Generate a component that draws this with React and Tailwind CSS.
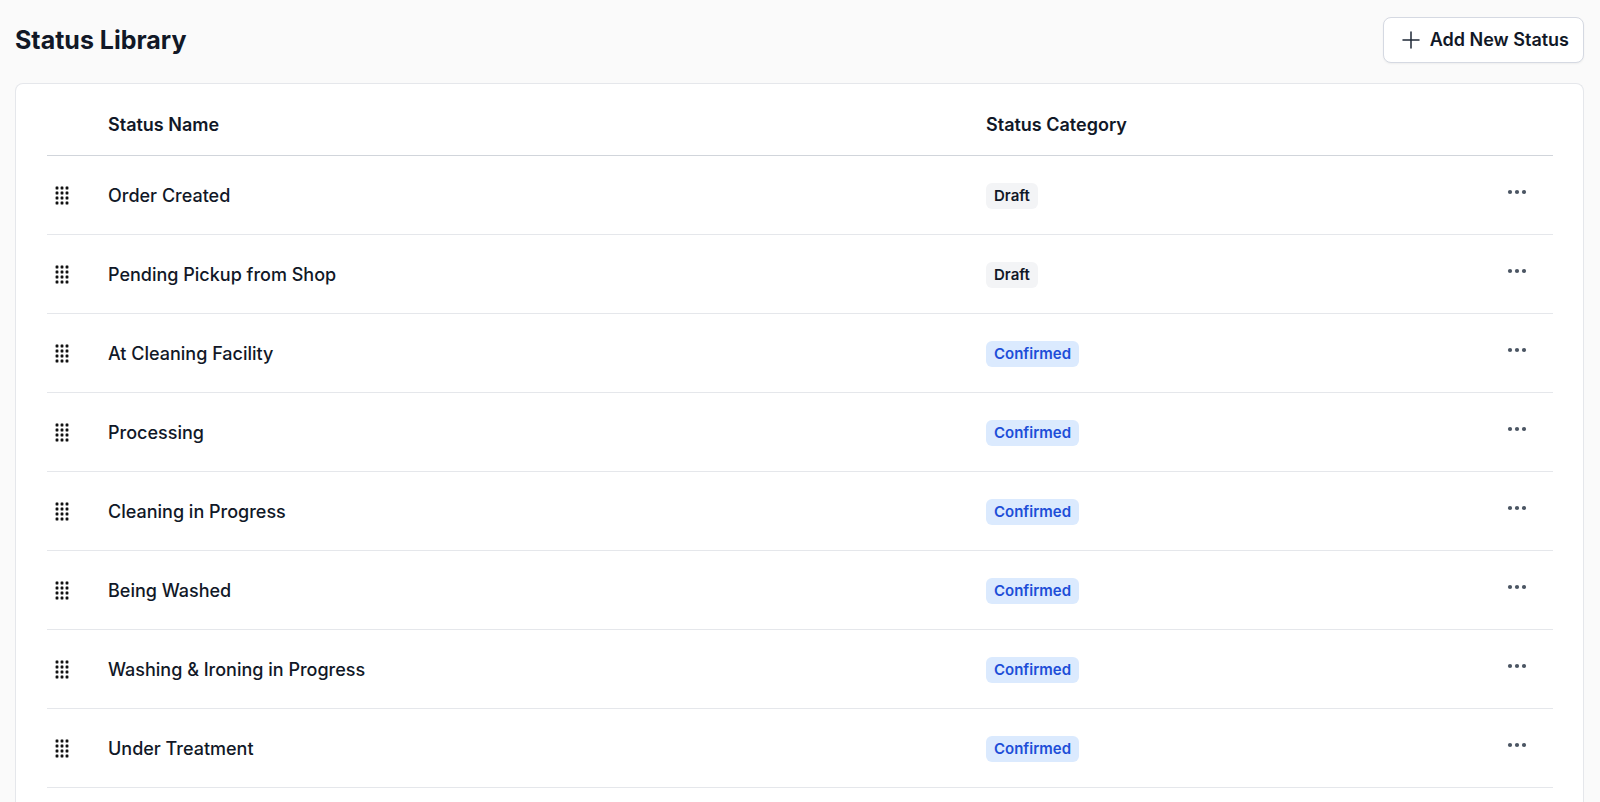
const statuses = [
  { name: "Order Created", category: "Draft" },
  { name: "Pending Pickup from Shop", category: "Draft" },
  { name: "At Cleaning Facility", category: "Confirmed" },
  { name: "Processing", category: "Confirmed" },
  { name: "Cleaning in Progress", category: "Confirmed" },
  { name: "Being Washed", category: "Confirmed" },
  { name: "Washing & Ironing in Progress", category: "Confirmed" },
  { name: "Under Treatment", category: "Confirmed" },
];

const badgeStyles = {
  Draft: "bg-[#f3f4f6] text-[#111827]",
  Confirmed: "bg-[#dbeafe] text-[#1d4ed8]",
};

function GripIcon() {
  return (
    <svg width="15" height="19" viewBox="0 0 15 19" fill="#111" aria-hidden="true">
      {[0, 5, 10].map((x) =>
        [0, 5, 10, 15].map((y) => (
          <rect key={`${x}-${y}`} x={x + 0.6} y={y + 0.6} width="2.8" height="2.8" rx="0.4" />
        ))
      )}
    </svg>
  );
}

function PlusIcon() {
  return (
    <svg width="18" height="18" viewBox="0 0 18 18" fill="none" stroke="#1f2937" strokeWidth="1.5" strokeLinecap="round" aria-hidden="true">
      <path d="M9 1v16M1 9h16" />
    </svg>
  );
}

function MoreIcon() {
  return (
    <svg width="20" height="6" viewBox="0 0 20 6" fill="#4b5563" aria-hidden="true">
      <circle cx="3" cy="3" r="2.1" />
      <circle cx="10" cy="3" r="2.1" />
      <circle cx="17" cy="3" r="2.1" />
    </svg>
  );
}

function StatusRow({ name, category }) {
  return (
    <tr className="h-[79px] border-b border-[#e5e7eb]">
      <td className="pt-0.5 pl-2">
        <button type="button" aria-label={`Reorder ${name}`} className="block cursor-grab">
          <GripIcon />
        </button>
      </td>
      <td className="px-4 pt-0.5 font-medium">{name}</td>
      <td className="px-4">
        <span className={`inline-flex h-[26px] items-center rounded-md px-2 align-middle text-[15px] font-semibold ${badgeStyles[category]}`}>
          {category}
        </span>
      </td>
      <td className="pb-1.5">
        <button type="button" aria-label={`Actions for ${name}`} className="mx-auto block">
          <MoreIcon />
        </button>
      </td>
    </tr>
  );
}

export default function App() {
  return (
    <main className="flex min-h-screen flex-col bg-[#fafafa] pt-[17px] pr-4 pl-[15px] font-['Inter',sans-serif] text-lg text-[#111827]">
      <header className="mb-5 flex items-center justify-between">
        <h1 className="text-[25px] font-bold">Status Library</h1>
        <button type="button" className="flex h-[46px] items-center gap-2.5 rounded-lg border border-[#d5d9e2] bg-white pr-3.5 pl-[18px] font-semibold shadow-xs">
          <PlusIcon />
          Add New Status
        </button>
      </header>
      <section className="flex-1 rounded-t-lg border border-b-0 border-[#e5e7eb] bg-white pr-[30px] pl-[31px]">
        <table className="w-full table-fixed border-collapse text-left">
          <colgroup>
            <col className="w-[45px]" />
            <col className="w-[58.3%]" />
            <col />
            <col className="w-[72px]" />
          </colgroup>
          <thead>
            <tr className="h-[71px] border-b border-[#d1d5db]">
              <td />
              <th scope="col" className="px-4 pt-3 font-semibold">Status Name</th>
              <th scope="col" className="px-4 pt-3 font-semibold">Status Category</th>
              <td />
            </tr>
          </thead>
          <tbody>
            {statuses.map((status) => (
              <StatusRow key={status.name} {...status} />
            ))}
          </tbody>
        </table>
      </section>
    </main>
  );
}
